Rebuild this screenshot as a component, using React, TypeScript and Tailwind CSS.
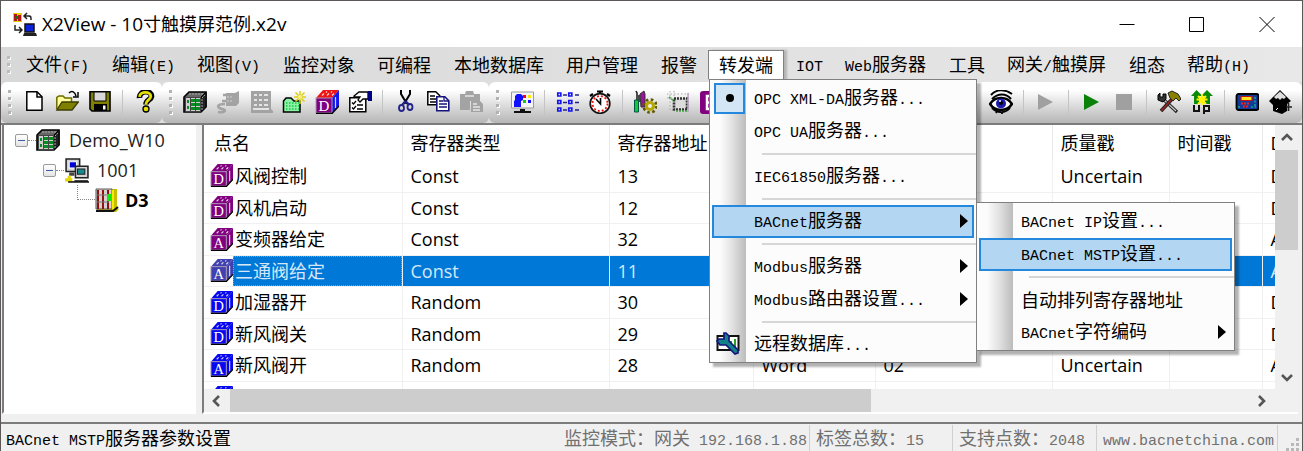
import type { ReactNode } from "react";

function cx(...parts: Array<string | false | null | undefined>) {
  return parts.filter(Boolean).join(" ");
}

/* Latin runs are set in a half-width mono face next to full-width Chinese */
function Mixed({ text, latin = "font-['Liberation_Mono',monospace] text-[15px]" }: { text: string; latin?: string }) {
  const runs = text.match(/[\x00-\x7f]+|[^\x00-\x7f]+/g) ?? [];
  return (
    <span className="whitespace-pre">
      {runs.map((run, i) =>
        run.charCodeAt(0) < 128 ? (
          <span key={i} className={latin}>
            {run}
          </span>
        ) : (
          run
        )
      )}
    </span>
  );
}

function Icon({ children, className = "size-6" }: { children: ReactNode; className?: string }) {
  return (
    <svg viewBox="0 0 24 24" className={cx("shrink-0", className)} fill="none" aria-hidden="true">
      {children}
    </svg>
  );
}

function Cube({ front, top, side, letter, className }: { front: string; top: string; side: string; letter: string; className?: string }) {
  return (
    <Icon className={className}>
      <path d="M1 8 L8 0 H24 L17 8Z" fill={top} />
      <path d="M17 8 L24 0 V16 L17 23Z" fill={side} />
      <path d="M7 5.500l2-2M12 5.500l2-2M17 5.500l2-2M11 2.500l1-1M16 2.500l1-1M20.500 7v11" stroke="#fff" strokeWidth="1.200" opacity=".8" />
      <rect x="1" y="8" width="16" height="15" fill={front} stroke="#a99ab4" />
      <path d="M1 23.500 H17 L24 16" stroke="#000" strokeWidth="1.400" />
      <text x="9" y="20.500" textAnchor="middle" fontSize="15" fontFamily="Liberation Serif, serif" fill="#fff">
        {letter}
      </text>
    </Icon>
  );
}

function Rack({ className }: { className?: string }) {
  return (
    <Icon className={className}>
      <path d="M1 7 L6 2 H23 V17 L18 22 H1Z" fill="#666" stroke="#000" strokeWidth="1.600" />
      <path d="M18 7 L23 2 V17 L18 22Z" fill="#222" stroke="#000" />
      <path d="M6 4h14M19 20V8l3-3" stroke="#aaa" strokeWidth="1" strokeDasharray="2 1" />
      <rect x="2" y="7" width="16" height="15" fill="#444" />
      <path d="M3 8h4v13H3zM8 8h4v13H8zM13 8h4v13h-4z" fill="#d0d0d0" />
      <path d="M4 10h2v3H4zM4 16h2v3H4zM8 9h4v3H8zM8 13h4v3H8zM8 17h4v3H8zM13 9h4v3h-4zM13 13h4v3h-4zM13 17h4v3h-4z" fill="#068c22" />
    </Icon>
  );
}

const icons = {
  file: (
    <Icon>
      <path d="M4.800 1.800H15l5 5V20.200H4.800Z" fill="#fff" stroke="#000" strokeWidth="1.500" />
      <path d="M15 2v5h5" stroke="#000" strokeWidth="1.500" />
    </Icon>
  ),
  open: (
    <Icon>
      <path d="M1.800 19V7.500L4 6h4l2 2h6.500v4" fill="#ffff9c" stroke="#6b6b00" strokeWidth="1.500" />
      <path d="M1.800 20 7 12H23.300L17 20Z" fill="#808000" stroke="#3c3c00" strokeWidth="1.300" />
      <path d="M14 3c3-3 6-1 7 3M23 2v5h-5" stroke="#000" strokeWidth="1.500" />
    </Icon>
  ),
  save: (
    <Icon>
      <path d="M2 1.800H22V21H4L2 19Z" fill="#808000" stroke="#000" strokeWidth="1.600" />
      <path d="M6 2h12v9H6z" fill="#d8d8d8" stroke="#000" />
      <path d="M6 14h13v7H6z" fill="#000" />
      <path d="M15 15.500h2.500v4H15z" fill="#fff" />
    </Icon>
  ),
  help: (
    <Icon>
      <path d="M6.500 8C6 0 19 0 18.500 6.500 18 10 13 10 13 14.500" stroke="#000" strokeWidth="5.600" />
      <path d="M6.500 6.800C7 1 18 1 17.800 6.500 17.500 10 12.800 10 12.800 14.500" stroke="#e3df00" strokeWidth="2.800" />
      <circle cx="13" cy="19" r="3" fill="#e3df00" stroke="#000" strokeWidth="1.300" />
    </Icon>
  ),
  rack: <Rack />,
  plug: (
    <Icon>
      <path d="M10 3h9l4-2v12l-3 3h-10z" fill="#a3a3a3" />
      <path d="M12 5H7M12 11H6M9 14c-9 0-8 4-3 5s3 4-4 3" stroke="#a3a3a3" strokeWidth="2.600" />
      <path d="M12 6v8M15 6v8" stroke="#d0d0d0" strokeDasharray="2 2" />
    </Icon>
  ),
  rackOff: (
    <Icon>
      <path d="M2 1h20v18l2 2v2H2z" fill="#a3a3a3" />
      <path d="M5 5h3M5 10h3M5 15h3M10 5h3M10 10h3M10 15h3M15 5h4M15 10h4M15 15h4M4 19h16" stroke="#e4e4e4" strokeWidth="2" />
    </Icon>
  ),
  newFolder: (
    <Icon>
      <path d="M1.500 22V11L4 8h5l3 3h6v11Z" fill="#8ef0a5" stroke="#000" strokeWidth="1.500" />
      <path d="M4 13h13M4 16h13M4 19h13" stroke="#12c849" strokeWidth="1.500" strokeDasharray="1.500 1.500" />
      <path d="M18 1v13M12 7h12M13.500 2.500l9 9M22.500 2.500l-9 9" stroke="#d9cf18" strokeWidth="1.500" />
      <circle cx="18" cy="7" r="2" fill="#fff27a" />
    </Icon>
  ),
  point: <Cube front="#800080" top="#f01414" side="#1414f0" letter="D" />,
  form: (
    <Icon>
      <path d="M1.800 7.800h16v14h-16z" fill="#fff" stroke="#000" strokeWidth="1.500" />
      <path d="M4 12.500l1.500 1.500L8 11M4 17.500l1.500 1.500L8 16M9 15h6M9 19h6" stroke="#000" strokeWidth="1.300" />
      <path d="M6 6l5-4h9v7h-5l-3 3-2-2 2-3H6z" fill="#fff" stroke="#000" strokeWidth="1.300" />
      <path d="M20 1h4v10h-4z" fill="#000080" />
    </Icon>
  ),
  cut: (
    <Icon>
      <path d="M8 0v4l6 10M17 0v4l-6 10" stroke="#000" strokeWidth="2" />
      <path d="M12.500 11 9 15M12.500 11l4 4" stroke="#22228c" strokeWidth="2" />
      <ellipse cx="8.500" cy="18" rx="2.500" ry="3" stroke="#22228c" strokeWidth="1.800" />
      <ellipse cx="17" cy="17" rx="2.500" ry="3" stroke="#22228c" strokeWidth="1.800" />
    </Icon>
  ),
  copy: (
    <Icon>
      <path d="M1.800 1.800h8l4 4v9h-12z" fill="#fff" stroke="#000" strokeWidth="1.500" />
      <path d="M4 6h5M4 9h7M4 12h7" stroke="#000" strokeWidth="1.300" />
      <path d="M10.800 6.800h8l4 4v10h-12z" fill="#fff" stroke="#14147c" strokeWidth="1.600" />
      <path d="M13 11h4M13 14h8M13 17h8M18 7v4h4" stroke="#14147c" strokeWidth="1.300" />
    </Icon>
  ),
  paste: (
    <Icon>
      <path d="M1 4h5l1-3h7l1 3h6v7H11v9H1z" fill="#a3a3a3" />
      <path d="M12 10h8l4 4v8H12z" fill="#a3a3a3" />
      <path d="M6 6h9M14 14h4M14 17h7M14 20h7" stroke="#e6e6e6" strokeWidth="1.400" />
    </Icon>
  ),
  monitor: (
    <Icon>
      <path d="M1.500 2h22v16h-22z" fill="#f4f4f4" stroke="#9a9a9a" />
      <path d="M5 6l2-2h4l2 2v4l-2 1v6H4v-6l1-1z" fill="#1010ff" />
      <path d="M13 5h3v3h-3z" fill="#f00" />
      <path d="M18 5h3v3h-3z" fill="#ffe800" />
      <path d="M13 10h3v3h-3z" fill="#12c912" />
      <path d="M18 10h3v3h-3z" fill="#1010ff" />
      <path d="M10 19h5v2h-5zM4 21h17v2H4z" fill="#111" />
    </Icon>
  ),
  list: (
    <Icon>
      {[3, 10.5, 18].map((y) => (
        <path key={y} d={`M2.800 ${y}h3v3h-3zM13.800 ${y}h3v3h-3z`} stroke="#1414f0" strokeWidth="1.700" />
      ))}
      <path d="M8 5h4M20 5h4M8 12.500h4M20 12.500h4M8 20h4M20 20h4" stroke="#22228c" strokeWidth="1.600" />
    </Icon>
  ),
  clock: (
    <Icon>
      <path d="M9 1.500h6M12 2v3M2 6l3-2M22 6l-3-2" stroke="#000" strokeWidth="2.200" />
      <circle cx="12" cy="13.500" r="9.800" fill="#fff" stroke="#111" strokeWidth="1.700" />
      <circle cx="12" cy="13.500" r="7.500" stroke="#e11" strokeWidth="1.800" strokeDasharray="2 2" />
      <path d="M8 9l4.500 5V8" stroke="#000" strokeWidth="1.600" />
    </Icon>
  ),
  tools: (
    <Icon>
      <path d="M3 1l1 2v7M6 12V5" stroke="#222" strokeWidth="1.600" />
      <path d="M1.500 10h4v12h-4z" fill="#13c93b" stroke="#054" />
      <path d="M7 4l4-3 1 3v13H8z" fill="#9b139b" stroke="#333" />
      <circle cx="17" cy="16" r="5" fill="#b5a800" />
      <circle cx="17" cy="16" r="6.500" stroke="#615900" strokeWidth="2.600" strokeDasharray="2.600 2.500" />
      <circle cx="17" cy="16" r="2" fill="#eee" />
    </Icon>
  ),
  chip: (
    <Icon>
      <path d="M1 4h22M1 8h14M4 1v20M8 1v8" stroke="#aaa" strokeDasharray="1.500 2" />
      <path d="M8 8.500h13v11H8z" fill="#dcdcdc" stroke="#333" strokeWidth="2.600" strokeDasharray="2 1" />
      <path d="M3 7l5 4M10 21h11" stroke="#43a843" strokeWidth="1.700" strokeDasharray="2 1" />
      <path d="M22 3v19" stroke="#b7a0c0" strokeWidth="1.500" />
    </Icon>
  ),
  event: (
    <Icon>
      <rect x="1" y="1" width="22" height="23" rx="3" fill="#800080" />
      <path d="M18 6H8v13h10M8 12.500h8" stroke="#fff" strokeWidth="2.500" />
    </Icon>
  ),
  eye: (
    <Icon>
      <path d="M2 5c5-6 14-6 21-1M3 9C9 3 17 3 22 9" stroke="#000" strokeWidth="2" />
      <path d="M1 14c5-8 17-8 22 0-5 8-17 8-22 0z" fill="#fff" stroke="#000" strokeWidth="2.600" />
      <circle cx="12" cy="13.500" r="5" fill="#1b1bb0" />
      <circle cx="12" cy="13" r="2" fill="#000" />
      <path d="M10 11h2" stroke="#fff" strokeWidth="1.500" />
      <path d="M3 18c5 5 13 6 18 0M8 21l-1 2M13 22v2" stroke="#000" strokeWidth="1.800" />
    </Icon>
  ),
  runOff: (
    <Icon>
      <path d="M4 4l15 8-15 8z" fill="#a0a0a0" />
    </Icon>
  ),
  run: (
    <Icon>
      <path d="M5 4l15 8-15 8z" fill="#0a820a" />
    </Icon>
  ),
  stop: (
    <Icon>
      <path d="M4 4h16v16H4z" fill="#a0a0a0" />
    </Icon>
  ),
  hammer: (
    <Icon>
      <path d="M6 9l14 13" stroke="#222" strokeWidth="3.200" />
      <path d="M7 10l12 11" stroke="#ccc" strokeWidth="1.200" />
      <path d="M3 3v4h3V4h3v5l-3 3-5-2V5z" fill="#333" stroke="#000" />
      <path d="M17 7 4 21" stroke="#222" strokeWidth="3.600" />
      <path d="M16 8 4 21" stroke="#9a2222" strokeWidth="1.800" />
      <path d="M11 3l4-2 6 3 3 5-2 2-3-3-3 3-3-3z" fill="#8a8000" stroke="#222" />
    </Icon>
  ),
  up: (
    <Icon>
      <path d="M6.500 0l6 6H9v8H4V6H1zM17 0l6 6h-3v8h-5V6h-4z" fill="#0a8a0a" />
      <path d="M12 4v11M6.500 9.500h11M8 6l8 8M16 6l-8 8" stroke="#fff200" strokeWidth="2" />
      <path d="M4 15v6h5v-6M14 24v-8h5v5h-5" stroke="#111" strokeWidth="2" />
    </Icon>
  ),
  panel: (
    <Icon>
      <rect x="1.500" y="4" width="22" height="16" rx="2" fill="#123c9c" stroke="#000" strokeWidth="1.800" />
      <path d="M6 6.500h11v4H6z" fill="#ffe31a" stroke="#c31414" strokeWidth="1.200" />
      <path d="M6 13.500h9M8 16.500h6" stroke="#e22" strokeWidth="1.800" strokeDasharray="2 1" />
      <path d="M20 7v10M4 16v2M16 17h5" stroke="#13a38f" strokeWidth="1.600" strokeDasharray="2 1.500" />
    </Icon>
  ),
  diamond: (
    <Icon>
      <path d="M1 11 12 0l11 11-4 3v7l-5 3-9-3v-6z" fill="#000" />
      <path d="M6 7l6-5.500L18 7l-2 2-2-1-2 2-2-2-2 1z" fill="#ddd" />
      <path d="M18 17h6M20.500 13v8" stroke="#222" strokeWidth="1.700" />
      <path d="M8 20l2-2" stroke="#fff" />
    </Icon>
  ),
  wrench: (
    <Icon>
      <path d="M1.500 4h21v14h-21z" fill="#fff" stroke="#111" strokeWidth="2" />
      <path d="M14 9h2v4h-2zM18 7h2v8h-2z" fill="#26a026" />
      <path d="M8 1v6H3l-2 2 3 4h6l9 9 3-1v-3l-9-9V4l-3-3z" fill="#118089" stroke="#14147c" strokeWidth="1.700" />
    </Icon>
  ),
};

type ToolItem = { icon: keyof typeof icons; label: string } | "sep";

const fileTools: ToolItem[] = [
  { icon: "file", label: "新建" },
  { icon: "open", label: "打开" },
  { icon: "save", label: "保存" },
  "sep",
  { icon: "help", label: "帮助" },
];

const editTools: ToolItem[] = [
  { icon: "rack", label: "设备" },
  { icon: "plug", label: "连接" },
  { icon: "rackOff", label: "模块" },
  { icon: "newFolder", label: "新建组" },
  { icon: "point", label: "监控点" },
  { icon: "form", label: "属性" },
  "sep",
  { icon: "cut", label: "剪切" },
  { icon: "copy", label: "复制" },
  { icon: "paste", label: "粘贴" },
];

const viewTools: ToolItem[] = [
  { icon: "monitor", label: "画面" },
  "sep",
  { icon: "list", label: "列表" },
  { icon: "clock", label: "定时" },
  "sep",
  { icon: "tools", label: "组件" },
  { icon: "chip", label: "驱动" },
  { icon: "event", label: "事件" },
];

const runTools: ToolItem[] = [
  { icon: "eye", label: "监视" },
  "sep",
  { icon: "runOff", label: "继续" },
  "sep",
  { icon: "run", label: "运行" },
  { icon: "stop", label: "停止" },
  "sep",
  { icon: "hammer", label: "工具" },
  { icon: "up", label: "上传" },
  "sep",
  { icon: "panel", label: "触摸屏" },
  { icon: "diamond", label: "网关" },
];

function Tools({ items }: { items: ToolItem[] }) {
  return (
    <>
      {items.map((item, i) =>
        item === "sep" ? (
          <span key={i} className="flex w-3 shrink-0 justify-center">
            <span className="h-6 w-px bg-[#c4c4c4]" />
          </span>
        ) : (
          <button key={i} type="button" aria-label={item.label} className="flex w-[33px] shrink-0 justify-center">
            {icons[item.icon]}
          </button>
        )
      )}
    </>
  );
}

function Grip() {
  return (
    <span className="flex w-4 shrink-0 flex-col items-center gap-1">
      {[0, 1, 2, 3].map((i) => (
        <span key={i} className="size-[3px] bg-[#b2b2b2] shadow-[1px_1px_0_#fff]" />
      ))}
    </span>
  );
}

function Band({ children, className }: { children: ReactNode; className?: string }) {
  return (
    <div className={cx("flex items-center rounded-md bg-linear-to-b from-white from-20% to-[#b6b6b6] pb-0.5", className)}>
      <Grip />
      {children}
    </div>
  );
}

type Entry = {
  text: string;
  arrow?: boolean;
  active?: boolean;
  checked?: boolean;
  icon?: ReactNode;
  children?: Array<Entry | "sep">;
};

const submenu: Array<Entry | "sep"> = [
  { text: "BACnet IP设置..." },
  { text: "BACnet MSTP设置...", active: true },
  "sep",
  { text: "自动排列寄存器地址" },
  { text: "BACnet字符编码", arrow: true },
];

const forwardMenu: Array<Entry | "sep"> = [
  { text: "OPC XML-DA服务器...", checked: true },
  { text: "OPC UA服务器..." },
  "sep",
  { text: "IEC61850服务器..." },
  "sep",
  { text: "BACnet服务器", arrow: true, active: true, children: submenu },
  "sep",
  { text: "Modbus服务器", arrow: true },
  { text: "Modbus路由器设置...", arrow: true },
  "sep",
  { text: "远程数据库...", icon: icons.wrench },
];

function Popup({ items, className }: { items: Array<Entry | "sep">; className: string }) {
  return (
    <ul
      role="menu"
      className={cx(
        "absolute border border-[#808080] bg-[linear-gradient(to_right,#fcfcfc_10px,#e2e2e2_22px,#bcbcbc_36px,#fcfcfc_36px)] pt-0.5 pb-px shadow-[4px_4px_2px_rgba(0,0,0,0.3)]",
        className
      )}
    >
      {items.map((item, i) =>
        item === "sep" ? (
          <li key={i} role="separator" className="flex h-3 items-center pl-[52px]">
            <span className="h-0.5 flex-1 bg-[#d6d6d6]" />
          </li>
        ) : (
          <li key={i} role="none" className="relative px-0.5">
            <button
              type="button"
              role="menuitem"
              className={cx(
                "flex h-[33px] w-full items-center border-2 pr-1 text-left",
                item.active ? "border-[#2489dc] bg-[#b3d7f2]" : "border-transparent"
              )}
            >
              <span className="flex w-10 shrink-0 items-center">
                {item.checked && (
                  <span className="flex size-[31px] items-center justify-center border-2 border-[#2489dc] bg-[#d3e6f5]">
                    <span className="size-2 rounded-full bg-black" />
                  </span>
                )}
                {item.icon && <span className="pl-0.5">{item.icon}</span>}
              </span>
              <span className="flex-1">
                <Mixed text={item.text} />
              </span>
              {item.arrow && (
                <svg viewBox="0 0 8 14" className="h-3.5 w-2" aria-hidden="true">
                  <path d="M0 0l8 7-8 7z" fill="#000" />
                </svg>
              )}
            </button>
            {item.children && <Popup items={item.children} className="-top-[3px] left-full w-[259px]" />}
          </li>
        )
      )}
    </ul>
  );
}

const menus = [
  "文件(F)",
  "编辑(E)",
  "视图(V)",
  "监控对象",
  "可编程",
  "本地数据库",
  "用户管理",
  "报警",
  "转发端",
  "IOT",
  "Web服务器",
  "工具",
  "网关/触摸屏",
  "组态",
  "帮助(H)",
];

const columns = [
  { name: "点名", width: "w-[198px]", pad: "pl-2.5" },
  { name: "寄存器类型", width: "w-[207px]", pad: "pl-2" },
  { name: "寄存器地址", width: "w-[144px]", pad: "pl-2" },
  { name: "", width: "w-[122px]", pad: "pl-2" },
  { name: "", width: "w-[177px]", pad: "pl-2" },
  { name: "质量戳", width: "w-[117px]", pad: "pl-2" },
  { name: "时间戳", width: "w-[93px]", pad: "pl-2" },
  { name: "D", width: "w-[140px]", pad: "pl-2" },
];

type Row = {
  name: string;
  kind: "D" | "A";
  type: string;
  addr: string;
  format?: string;
  value?: string;
  quality?: string;
  selected?: boolean;
};

const rows: Row[] = [
  { name: "风阀控制", kind: "D", type: "Const", addr: "13", quality: "Uncertain" },
  { name: "风机启动", kind: "D", type: "Const", addr: "12" },
  { name: "变频器给定", kind: "A", type: "Const", addr: "32" },
  { name: "三通阀给定", kind: "A", type: "Const", addr: "11", selected: true },
  { name: "加湿器开", kind: "D", type: "Random", addr: "30" },
  { name: "新风阀关", kind: "D", type: "Random", addr: "29" },
  { name: "新风阀开", kind: "A", type: "Random", addr: "28", format: "Word", value: "02", quality: "Uncertain" },
];

function cubeColor(row: Row) {
  if (row.selected) return "#4040b0";
  return row.type === "Const" ? "#800080" : "#0808f0";
}

function PointTable() {
  return (
    <table className="w-[1198px] table-fixed border-collapse text-left">
      <thead>
        <tr className="h-[35px]">
          {columns.map((c, i) => (
            <th key={i} className={cx("border-r border-[#e8e8e8] py-0 pr-0 font-normal", c.pad, c.width)}>
              {c.name}
            </th>
          ))}
        </tr>
      </thead>
      <tbody>
        {rows.map((row) => {
          const cell = cx(
            "border-r border-b border-[#f0f0f0] py-0 pr-0 pl-2",
            row.selected && "border-t border-t-[#e08a3c] bg-[#0078d7] text-[#d5e8f8] [border-top-style:dotted]"
          );
          return (
            <tr key={row.name} className="odd:h-8 even:h-[31px]">
              <td className="border-r border-b border-[#f0f0f0] p-0">
                <div className="flex items-stretch">
                  <span className="flex w-[29px] shrink-0 items-center pl-1.5">
                    <Cube
                      front={cubeColor(row)}
                      top={cubeColor(row)}
                      side={cubeColor(row)}
                      letter={row.kind}
                      className="size-[23px]"
                    />
                  </span>
                  <span
                    className={cx(
                      "flex-1 pl-0.5 leading-[30px]",
                      row.selected && "bg-[#0078d7] text-[#d5e8f8] outline-1 -outline-offset-1 outline-dotted outline-[#e08a3c]"
                    )}
                  >
                    {row.name}
                  </span>
                </div>
              </td>
              <td className={cell}>{row.type}</td>
              <td className={cell}>{row.addr}</td>
              <td className={cell}>{row.format}</td>
              <td className={cell}>{row.value}</td>
              <td className={cell}>{row.quality}</td>
              <td className={cell} />
              <td className={cell}>{row.kind}</td>
            </tr>
          );
        })}
        <tr>
          <td className="border-r border-[#f0f0f0] pt-1 pb-0 pl-1.5">
            <Cube front="#0808f0" top="#0808f0" side="#0808f0" letter="D" className="size-[23px]" />
          </td>
          {columns.slice(1).map((c, i) => (
            <td key={i} className="border-r border-[#f0f0f0]" />
          ))}
        </tr>
      </tbody>
    </table>
  );
}

function Chevron({ d, label }: { d: string; label: string }) {
  return (
    <button type="button" aria-label={label} className="flex size-[23px] shrink-0 items-center justify-center">
      <svg viewBox="0 0 12 12" className="size-3" fill="none" stroke="#555" strokeWidth="2.600">
        <path d={d} />
      </svg>
    </button>
  );
}

function Expander() {
  return (
    <button
      type="button"
      aria-label="折叠"
      className="flex size-[13px] shrink-0 items-center justify-center rounded-xs border border-[#9a9a9a] bg-linear-to-b from-white to-[#e4e4e4]"
    >
      <span className="h-px w-[7px] bg-[#3c5aa8]" />
    </button>
  );
}

function Tree() {
  return (
    <ul className="pl-[11px] text-[#222]">
      <li>
        <div className="flex h-[30px] items-center">
          <Expander />
          <span className="w-2 border-t border-dotted border-[#888]" />
          <Rack className="mr-[9px] size-6" />
          Demo_W10
        </div>
        <ul className="pl-[28px]">
          <li>
            <div className="flex h-[30px] items-center">
              <Expander />
              <span className="w-2 border-t border-dotted border-[#888]" />
              <Icon className="mr-2 size-[25px]">
                <path d="M2 1h13v12H2z" fill="#d5d5d5" stroke="#222" strokeWidth="1.500" />
                <path d="M5 3.500h7v6H5z" fill="#0000d8" stroke="#fff" />
                <path d="M11 8h12v11H11z" fill="#d5d5d5" stroke="#222" strokeWidth="1.500" />
                <path d="M13 10.500h7v5h-7z" fill="#138d92" stroke="#222" />
                <path d="M5 14h5v3H5zM10 21h13v2H10z" fill="#444" />
                <path d="M5 17v4M1 21h7" stroke="#e6d800" strokeWidth="3" />
                <path d="M4 23h20" stroke="#111" strokeWidth="1.500" />
              </Icon>
              1001
            </div>
            <ul className="pl-[34px]">
              <li className="flex h-[30px] items-center font-bold text-black">
                <span className="mb-[15px] h-[15px] w-[18px] border-b border-l border-dotted border-[#888]" />
                <Icon className="mr-[6px] size-6">
                  <path d="M2 1h20v19l2 1-3 3H2z" fill="#c9bd00" />
                  <path d="M1 1h16v20H1z" fill="#d6cfcf" stroke="#555" />
                  <path d="M2 2h2v19H2zM7 2h2v19H7zM12 2h2v19h-2z" fill="#8e1111" />
                  <path d="M2 7h12M2 14h12" stroke="#777" />
                  <path d="M12 6h4v7h-4z" fill="#12e512" />
                  <path d="M18 2v19" stroke="#f5ec00" strokeWidth="2" />
                  <path d="M1 23h17l5-4" stroke="#111" strokeWidth="2" />
                </Icon>
                D3
              </li>
            </ul>
          </li>
        </ul>
      </li>
    </ul>
  );
}

const statusItems = [
  { text: "监控模式：网关 192.168.1.88", space: "pr-0.5" },
  { text: "标签总数：15", space: "pl-1.5 pr-7" },
  { text: "支持点数：2048", space: "pl-1.5 pr-[11px]" },
  { text: "www.bacnetchina.com", space: "pl-1.5 pr-[3px]" },
];

export default function App() {
  return (
    <div className="flex h-screen flex-col overflow-hidden border-x border-t border-[#5c5858] bg-[#f0f0f0] font-['Noto_Sans_CJK_SC',sans-serif] text-[18px] leading-6 text-black">
      {/* Title bar */}
      <header className="flex h-[46px] shrink-0 items-center bg-white pl-3">
        <Icon className="mr-[5px] size-6">
          <path d="M0 1h9v9H0z" fill="#e3d400" />
          <path d="M1 2h3v7H1zM5 3h3v6H5z" fill="#b51616" />
          <path d="M3 4h2v3H3z" fill="#0a7a1a" />
          <path d="M12 4h4c2 0 2 1 2 4M14 1l-3 3 3 3M2 13v5h6M6 15l3 3-3 3" stroke="#222" strokeWidth="1.500" />
          <path d="M12 12h9v8h-9z" fill="#0b22d8" stroke="#111" strokeWidth="1.500" />
          <path d="M11 21h12l1 3H10z" fill="#222" />
        </Icon>
        <h1 className="flex-1 pb-0.5">
          <Mixed text="X2View - 10寸触摸屏范例.x2v" latin="font-['Open_Sans',sans-serif] text-[19px]" />
        </h1>
        <div className="flex">
          {[
            ["最小化", "M.5 8.500h15"],
            ["最大化", "M.5 1.500h14v14h-14z"],
            ["关闭", "M.5 1l15 15M15.500 1l-15 15"],
          ].map(([label, d]) => (
            <button key={label} type="button" aria-label={label} className="flex h-11 w-[70px] items-center justify-center">
              <svg viewBox="0 0 16 17" className="h-[17px] w-4" fill="none" stroke="#000">
                <path d={d} />
              </svg>
            </button>
          ))}
        </div>
      </header>

      {/* Menu bar */}
      <nav className="flex h-[35px] shrink-0 items-center bg-linear-to-r from-[#d8d8d8] to-[#e8e8e8]">
        <span className="flex w-3.5 shrink-0 flex-col items-center gap-1">
          {[0, 1, 2].map((i) => (
            <span key={i} className="size-[3px] bg-[#bbb] shadow-[1px_1px_0_#fff]" />
          ))}
        </span>
        {menus.map((m) => {
          const open = m === "转发端";
          return (
            <div key={m} className="relative shrink-0 even:mr-px">
              <button
                type="button"
                aria-expanded={open}
                className={cx(
                  "h-[30px] border px-2.5 pb-0.5",
                  open ? "border-[#808080] border-b-white bg-white shadow-[3px_0_2px_rgba(0,0,0,0.2)]" : "border-transparent"
                )}
              >
                <Mixed text={m} />
              </button>
              {open && <Popup items={forwardMenu} className="top-full left-px z-10 -mt-px w-[268px]" />}
            </div>
          );
        })}
      </nav>

      {/* Toolbar */}
      <div className="flex h-[41px] shrink-0 bg-[#dedede]">
        <Band className="w-[161px] shrink-0">
          <Tools items={fileTools} />
        </Band>
        <Band className="w-[327px] shrink-0">
          <Tools items={editTools} />
        </Band>
        <Band className="min-w-0 flex-1 pr-1.5">
          <Tools items={viewTools} />
          <span className="flex-1" />
          <Tools items={runTools} />
        </Band>
      </div>

      {/* Tree and point list */}
      <main className="flex min-h-0 flex-1 gap-1.5 border-t-2 border-[#7c7c7c] pr-1 pb-2 pl-px font-['Open_Sans','Noto_Sans_CJK_SC',sans-serif]">
        <aside className="w-[194px] shrink-0 overflow-hidden border-b-2 border-l-2 border-b-white border-l-[#7c7c7c] bg-white">
          <Tree />
        </aside>
        <section className="flex min-w-0 flex-1 flex-col border-b-2 border-l-2 border-b-white border-l-[#7c7c7c]">
          <div className="flex min-h-0 flex-1">
            <div className="min-w-0 flex-1 overflow-hidden bg-white">
              <PointTable />
            </div>
            <div className="flex w-[23px] shrink-0 flex-col">
              <Chevron label="向上" d="M1 9l5-5 5 5" />
              <span className="mt-0.5 h-[100px] bg-[#cdcdcd]" />
              <span className="flex-1" />
              <Chevron label="向下" d="M1 3l5 5 5-5" />
            </div>
          </div>
          <div className="flex h-[23px] shrink-0 items-center pr-[25px]">
            <Chevron label="向左" d="M9 1L4 6l5 5" />
            <span className="ml-[3px] h-full w-3/5 bg-[#cdcdcd]" />
            <span className="flex-1" />
            <Chevron label="向右" d="M3 1l5 5-5 5" />
          </div>
        </section>
      </main>

      {/* Status bar */}
      <footer className="flex h-[29px] shrink-0 items-center border-t-2 border-[#7c7c7c] pt-1 pl-[5px]">
        <span className="flex-1">
          <Mixed text="BACnet MSTP服务器参数设置" />
        </span>
        {statusItems.map((s) => (
          <span key={s.text} className={cx("shrink-0 border-r border-[#d0d0d0] text-[#707070]", s.space)}>
            <Mixed text={s.text} />
          </span>
        ))}
        <svg viewBox="0 0 24 24" className="size-6" fill="#b8b8b8" aria-hidden="true">
          <path d="M18 10h3v3h-3zM13 15h3v3h-3zM18 15h3v3h-3zM8 20h3v3H8zM13 20h3v3h-3zM18 20h3v3h-3z" />
        </svg>
      </footer>
    </div>
  );
}
